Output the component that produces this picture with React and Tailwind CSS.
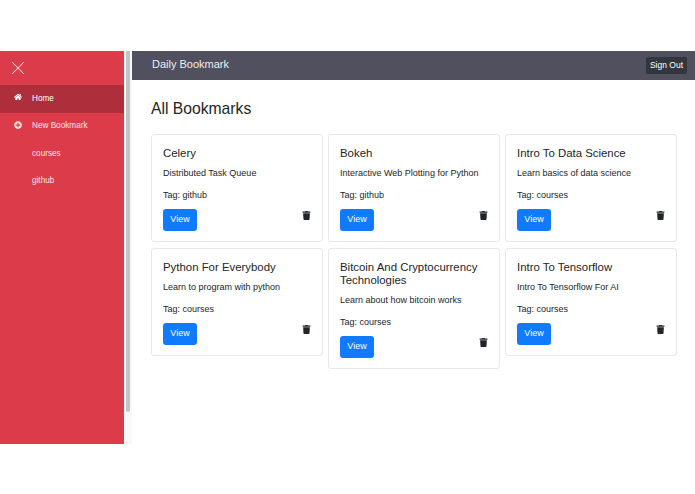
import { X } from 'lucide-react'
import { FaHome, FaPlusCircle, FaTrash } from 'react-icons/fa'

const bookmarks = [
  { title: 'Celery', desc: 'Distributed Task Queue', tag: 'github' },
  { title: 'Bokeh', desc: 'Interactive Web Plotting for Python', tag: 'github' },
  { title: 'Intro To Data Science', desc: 'Learn basics of data science', tag: 'courses' },
  { title: 'Python For Everybody', desc: 'Learn to program with python', tag: 'courses' },
  { title: 'Bitcoin And Cryptocurrency Technologies', desc: 'Learn about how bitcoin works', tag: 'courses' },
  { title: 'Intro To Tensorflow', desc: 'Intro To Tensorflow For AI', tag: 'courses' },
]

function NavItem({ icon, label, active }) {
  return (
    <div className={`flex h-[27.5px] items-center text-[8.2px] ${active ? 'bg-[#ae2f3b] text-white' : 'text-[#fbe6e8]'}`}>
      <span className="flex w-[32px] justify-center pb-[3px] pl-[4px]">{icon}</span>
      <span>{label}</span>
    </div>
  )
}

function Card({ title, desc, tag }) {
  return (
    <div className="rounded-[3px] border border-[#e8e8e8] bg-white px-[11px] pt-[11.5px] pb-[10px]">
      <h5 className="text-[11.4px] leading-[13px] text-[#212529]">{title}</h5>
      <p className="mt-[7px] text-[9px] leading-[13.5px] text-[#212529]">{desc}</p>
      <p className="mt-[8.5px] text-[9px] leading-[13.5px] text-[#212529]">Tag: {tag}</p>
      <div className="mt-[7px] flex items-center justify-between">
        <button className="h-[22px] w-[34px] rounded-[3px] bg-[#107bfe] text-[9px] text-white">View</button>
        <FaTrash className="mb-[10px] text-[9px] text-[#212529]" />
      </div>
    </div>
  )
}

export default function App() {
  return (
    <div className="h-[494px] w-[695px] overflow-hidden bg-white pt-[51px] font-['Liberation_Sans',sans-serif]">
      <div className="flex h-[393px]">
        <aside className="w-[124px] shrink-0 bg-[#dc3b49]">
          <div className="flex h-[34px] items-center pl-[7px]">
            <X size={22} strokeWidth={1.1} color="#f8dadd" />
          </div>
          <NavItem active label="Home" icon={<FaHome className="text-[8px]" />} />
          <NavItem label="New Bookmark" icon={<FaPlusCircle className="text-[8px]" />} />
          <NavItem label="courses" />
          <NavItem label="github" />
        </aside>

        {/* scrollbar */}
        <div className="w-[8px] shrink-0 bg-[#f8f8f8] pl-[2px]">
          <div className="h-[361px] w-[4px] rounded-b-[2px] bg-[#c4c4c4]" />
        </div>

        <main className="min-w-0 flex-1">
          <header className="flex h-[29px] items-center justify-between bg-[#50505f] pr-[8px] pl-[20px]">
            <span className="pb-[2px] text-[11px] text-[#eeeef0]">Daily Bookmark</span>
            <button className="h-[17px] w-[41px] rounded-[2px] bg-[#33363d] text-[8.5px] text-white">Sign Out</button>
          </header>
          <div className="pt-[19px] pr-[18px] pl-[19px]">
            <h1 className="text-[15.7px] leading-[19px] text-[#212529]">All Bookmarks</h1>
            <div className="mt-[16px] grid grid-cols-3 items-start gap-x-[5px] gap-y-[6px]">
              {bookmarks.map((b) => (
                <Card key={b.title} {...b} />
              ))}
            </div>
          </div>
        </main>
      </div>
    </div>
  )
}
